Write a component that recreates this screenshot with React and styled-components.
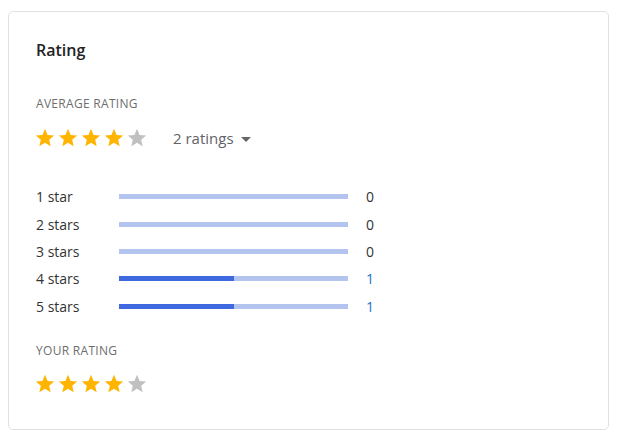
import React from 'react';
import styled, { createGlobalStyle } from 'styled-components';

const GlobalStyle = createGlobalStyle`
  body {
    margin: 11px 10px 8px 8px;
    background: #fff;
    font-family: "Open Sans", "Noto Sans", sans-serif;
  }
`;

const Card = styled.div`
  box-sizing: border-box;
  width: 601px;
  height: 419px;
  border: 1px solid #e0e0e0;
  border-radius: 5px;
  padding: 27px 27px 0 27px;
`;

const Title = styled.h2`
  margin: 0;
  font-size: 16px;
  line-height: 22px;
  font-weight: 600;
  color: #222;
`;

const SectionLabel = styled.div`
  font-size: 12px;
  line-height: 16px;
  letter-spacing: 0.3px;
  color: #6e6e6e;
  text-transform: uppercase;
  margin-top: ${(p) => p.$top}px;
`;

const StarRow = styled.div`
  display: flex;
  align-items: center;
  height: 24px;
  margin-top: ${(p) => p.$top}px;
  margin-left: -2px;
`;

const Stars = styled.div`
  display: flex;
  gap: 1px;
`;

const StarIcon = styled.svg`
  width: 22px;
  height: 22px;
  fill: ${(p) => (p.$on ? '#ffb400' : '#c0c0c0')};
`;

const Count = styled.button`
  display: flex;
  align-items: center;
  gap: 7px;
  margin-left: 25px;
  padding: 0;
  border: none;
  background: none;
  font-family: inherit;
  font-size: 15px;
  color: #5f6368;
  cursor: pointer;
`;

const Caret = styled.span`
  width: 0;
  height: 0;
  border-left: 5px solid transparent;
  border-right: 5px solid transparent;
  border-top: 5px solid #666;
  margin-top: 2px;
`;

const Histogram = styled.div`
  margin-top: 33px;
  display: grid;
  grid-template-columns: 83px 229px auto;
  grid-auto-rows: 27.4px;
  align-items: center;
`;

const RowLabel = styled.span`
  font-size: 14px;
  color: #333;
`;

const Track = styled.div`
  height: 5px;
  background: #b3c4ef;
`;

const Fill = styled.div`
  height: 100%;
  background: #3e69df;
`;

const RowCount = styled.span`
  font-size: 14px;
  margin-left: 18px;
  color: ${(p) => (p.$hot ? '#1a73c4' : '#333')};
`;

const Star = ({ on }) => (
  <StarIcon $on={on} viewBox="0 0 24 24">
    <path d="M12 17.27L18.18 21l-1.64-7.03L22 9.24l-7.19-.61L12 2 9.19 8.63 2 9.24l5.46 4.73L5.82 21z" />
  </StarIcon>
);

const StarSet = ({ value }) => (
  <Stars>
    {[1, 2, 3, 4, 5].map((i) => (
      <Star key={i} on={i <= value} />
    ))}
  </Stars>
);

const rows = [
  { label: '1 star', count: 0 },
  { label: '2 stars', count: 0 },
  { label: '3 stars', count: 0 },
  { label: '4 stars', count: 1 },
  { label: '5 stars', count: 1 },
];

const total = 2;

export default function App() {
  return (
    <>
      <GlobalStyle />
      <Card>
        <Title>Rating</Title>
        <SectionLabel $top={35}>Average rating</SectionLabel>
        <StarRow $top={14}>
          <StarSet value={4} />
          <Count>
            2 ratings <Caret />
          </Count>
        </StarRow>
        <Histogram>
          {rows.map((r) => (
            <React.Fragment key={r.label}>
              <RowLabel>{r.label}</RowLabel>
              <Track>
                <Fill style={{ width: `${(r.count / total) * 100}%` }} />
              </Track>
              <RowCount $hot={r.count > 0}>{r.count}</RowCount>
            </React.Fragment>
          ))}
        </Histogram>
        <SectionLabel $top={23}>Your rating</SectionLabel>
        <StarRow $top={13}>
          <StarSet value={4} />
        </StarRow>
      </Card>
    </>
  );
}
